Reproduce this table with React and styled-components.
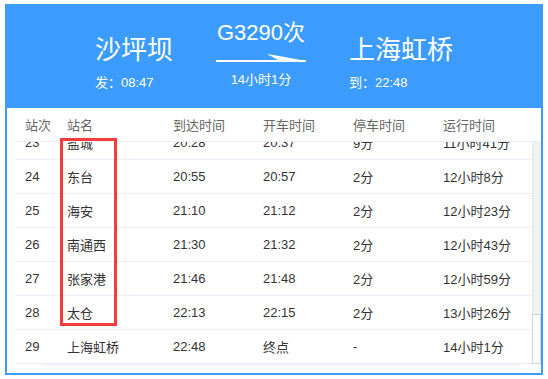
import React, { useLayoutEffect, useRef } from 'react'
import styled, { createGlobalStyle } from 'styled-components'

const BLUE = '#3c9cfe'

const GlobalStyle = createGlobalStyle`
  body {
    margin: 0;
    background: #fff;
    font-family: "Liberation Sans", "Noto Sans CJK SC", sans-serif;
  }
`

const Page = styled.div`
  padding: 4px 5px;
`

const Card = styled.div`
  position: relative;
  width: 538px;
  height: 371px;
  box-sizing: border-box;
  border: 2px solid ${BLUE};
  display: flex;
  flex-direction: column;
  background: #fff;
`

const Header = styled.div`
  flex: none;
  height: 102px;
  background: ${BLUE};
  color: #fff;
  display: flex;
  justify-content: center;
  gap: 43px;
`

const Station = styled.div`
  padding-top: 29px;
`

const StationName = styled.div`
  font-size: 26px;
  line-height: 31px;
  white-space: nowrap;
`

const SmallText = styled.div`
  margin-top: 8px;
  font-size: 13px;
  line-height: 18px;
  white-space: nowrap;
`

const Train = styled.div`
  width: 90px;
  padding-top: 14px;
  text-align: center;
`

const TrainNo = styled.div`
  font-size: 22px;
  line-height: 26px;
  white-space: nowrap;
`

const Arrow = styled.svg`
  display: block;
  margin-top: 6px;
`

const Table = styled.div`
  flex: 1;
  display: flex;
  flex-direction: column;
  padding-left: 8px;
`

const Row = styled.div`
  display: grid;
  grid-template-columns: 42px 106px 90px 90px 90px 1fr;
  align-items: center;
  height: 34px;
  box-sizing: border-box;
  border-bottom: 1px solid #ebeef5;
  font-size: 13px;
  color: ${p => (p.$head ? '#666' : '#333')};
  flex: none;
`

const Cell = styled.div`
  padding-left: 10px;
  white-space: nowrap;
`

const Body = styled.div`
  flex: none;
  height: 222px;
  display: flex;
`

const Scroll = styled.div`
  flex: 1;
  overflow: hidden;
`

const Track = styled.div`
  flex: none;
  width: 9px;
  box-sizing: border-box;
  background: #f1f1f1;
  border-left: 1px solid #e6e6e6;
  display: flex;
  flex-direction: column;
  justify-content: flex-end;
`

const Thumb = styled.div`
  margin-left: -1px;
  box-sizing: border-box;
  background: #fff;
  border: 1px solid #d2d2d2;
`

const Shade = styled.div`
  flex: 1;
  margin: 0 20px 0 30px;
  background: linear-gradient(to bottom, #f2f2f2, #fff 4px);
`

const Mark = styled.div`
  position: absolute;
  left: 53px;
  top: 132px;
  width: 57px;
  height: 188px;
  box-sizing: border-box;
  border: 3px solid #f33c3c;
  pointer-events: none;
`

// 运行分钟, 停车分钟
const stops = [
  ['沙坪坝', 0, 0],
  ['重庆北', 25, 3],
  ['长寿北', 48, 2],
  ['垫江', 70, 2],
  ['梁平南', 90, 2],
  ['万州北', 122, 4],
  ['云阳', 145, 2],
  ['奉节', 166, 2],
  ['巫山', 186, 2],
  ['巴东北', 210, 2],
  ['襄阳东', 270, 4],
  ['邓州东', 298, 2],
  ['南阳东', 318, 3],
  ['方城', 340, 2],
  ['郑州东', 400, 6],
  ['开封北', 422, 2],
  ['商丘', 462, 3],
  ['徐州东', 515, 5],
  ['宿迁', 556, 2],
  ['淮安东', 598, 3],
  ['阜宁南', 640, 2],
  ['建湖', 662, 2],
  ['盐城', 701, 9],
  ['东台', 728, 2],
  ['海安', 743, 2],
  ['南通西', 763, 2],
  ['张家港', 779, 2],
  ['太仓', 806, 2],
  ['上海虹桥', 841, 0],
]

const START = 8 * 60 + 47
const clock = m => {
  const t = m % 1440
  return String(Math.floor(t / 60)).padStart(2, '0') + ':' + String(t % 60).padStart(2, '0')
}
const runText = m => {
  const h = Math.floor(m / 60)
  return h ? `${h}小时${m % 60}分` : `${m}分`
}

const rows = stops.map(([name, run, stop], i) => {
  const first = i === 0
  const last = i === stops.length - 1
  return [
    i + 1,
    name,
    first ? '----' : clock(START + run),
    last ? '终点' : clock(START + run + stop),
    first || last ? '-' : `${stop}分`,
    first ? '-' : runText(run),
  ]
})

const heads = ['站次', '站名', '到达时间', '开车时间', '停车时间', '运行时间']

const VIEW = 222
const ROW = 34
const thumbHeight = Math.round((VIEW * VIEW) / (rows.length * ROW))

export default function App() {
  const scrollRef = useRef(null)

  useLayoutEffect(() => {
    const el = scrollRef.current
    if (el) el.scrollTop = el.scrollHeight
  }, [])

  return (
    <Page>
      <GlobalStyle />
      <Card>
        <Header>
          <Station>
            <StationName>沙坪坝</StationName>
            <SmallText>发：08:47</SmallText>
          </Station>
          <Train>
            <TrainNo>G3290次</TrainNo>
            <Arrow width="90" height="11" viewBox="0 0 90 11">
              <rect x="0" y="8" width="90" height="2" fill="#fff" />
              <path d="M51 2 Q70 5 90 9 L62 8 Z" fill="#fff" />
            </Arrow>
            <SmallText>14小时1分</SmallText>
          </Train>
          <Station>
            <StationName>上海虹桥</StationName>
            <SmallText>到：22:48</SmallText>
          </Station>
        </Header>
        <Table>
          <Row $head>
            {heads.map(h => <Cell key={h}>{h}</Cell>)}
          </Row>
          <Body>
            <Scroll ref={scrollRef}>
              {rows.map(r => (
                <Row key={r[0]}>
                  {r.map((v, j) => <Cell key={j}>{v}</Cell>)}
                </Row>
              ))}
            </Scroll>
            <Track>
              <Thumb style={{ height: thumbHeight }} />
            </Track>
          </Body>
          <Shade />
        </Table>
        <Mark />
      </Card>
    </Page>
  )
}
